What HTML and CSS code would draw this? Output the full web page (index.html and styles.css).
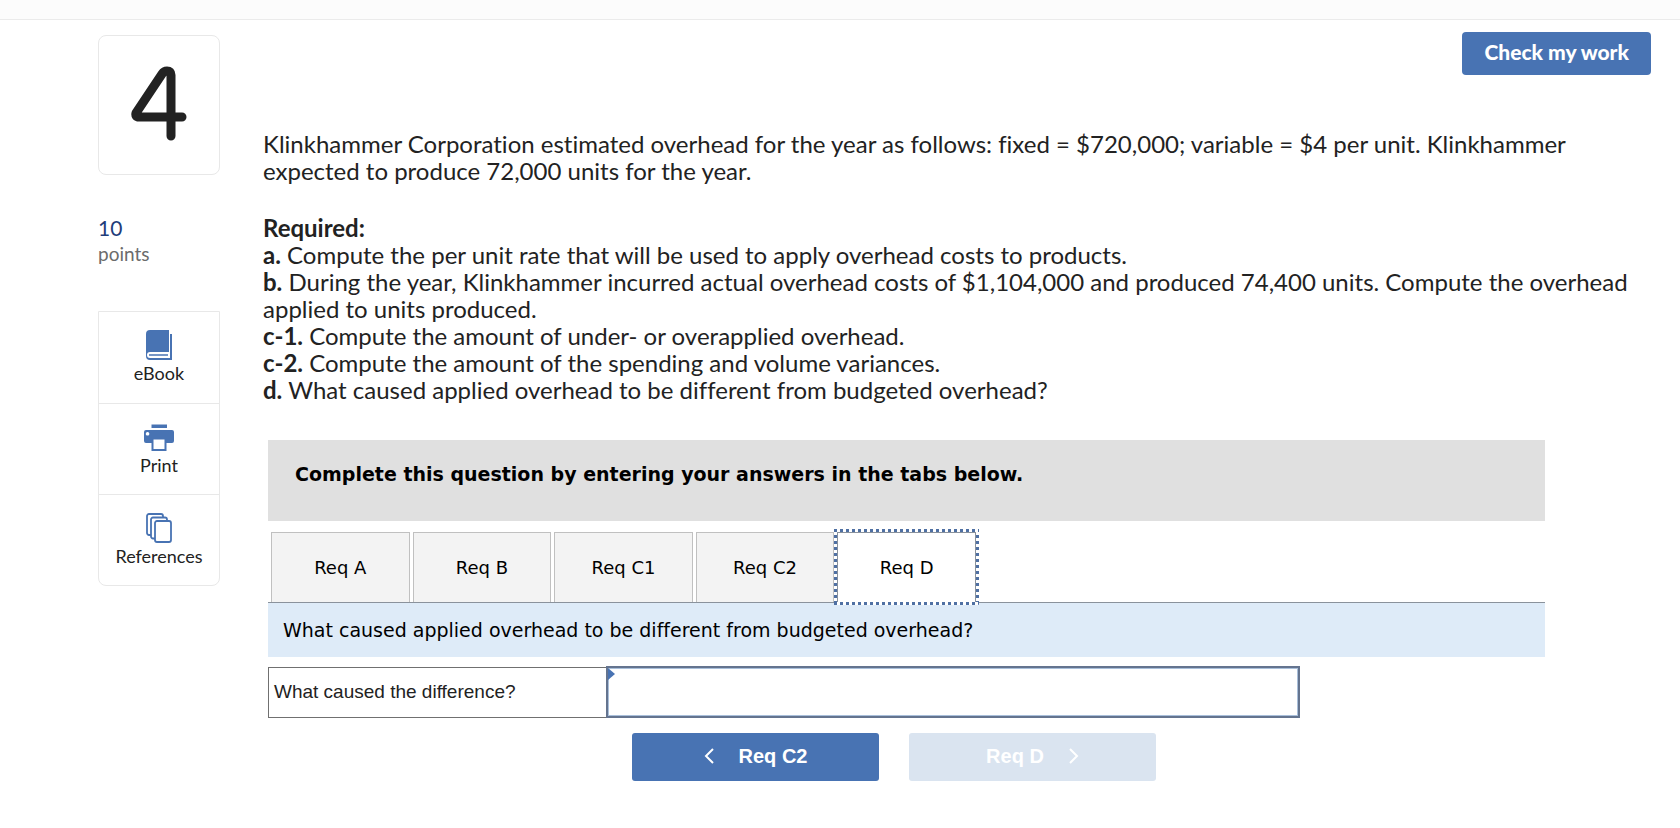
FILE: index.html
```
<!DOCTYPE html>
<html lang="en">
<head>
	<meta charset="utf-8">
	<meta name="viewport" content="width=device-width, initial-scale=1">
	<title>Question 4</title>
	<link rel="stylesheet" href="styles.css">
</head>
<body>
	<header class="topbar"></header>
	<div class="page">
		<aside class="sidebar">
			<div class="number">
				<svg width="56" height="76" viewBox="0 0 56 76" role="img" aria-label="4">
					<path d="M40 70V9Q40 5 36 5Q33 5 31 8L5 47Q4 51 8 51H51" fill="none" stroke="#222" stroke-width="9" stroke-linecap="round" stroke-linejoin="round"/>
				</svg>
			</div>
			<div class="points">
				<p class="points_num">10</p>
				<p class="points_text">points</p>
			</div>
			<nav class="tools">
				<a class="tool" href="#">
					<svg width="30" height="30" viewBox="0 0 30 30">
						<path fill-rule="evenodd" d="M6 0H25V22H6Q3 22 3 25Q3 28 6 28H26V4H28V30H6Q2 30 2 26V4Q2 0 6 0Z" fill="#4873b3"/>
						<path d="M5 25H24" stroke="#4873b3" stroke-width="1.5"/>
					</svg>
					<span>eBook</span>
				</a>
				<a class="tool" href="#">
					<svg width="30" height="30" viewBox="0 0 30 30">
						<path d="M7.500 2.500H23V6H7.500Z" fill="#4873b3"/>
						<path fill-rule="evenodd" d="M2 8H28Q30 8 30 10V19Q30 21 28 21H22.500V29H7.500V21H2Q0 21 0 19V10Q0 8 2 8ZM9.500 17.500V27H20.500V17.500ZM3.500 10A1.800 1.800 0 1 0 3.600 10Z" fill="#4873b3"/>
					</svg>
					<span>Print</span>
				</a>
				<a class="tool" href="#">
					<svg width="30" height="30" viewBox="0 0 30 30" fill="#fff" stroke="#4873b3" stroke-width="1.800">
						<rect x="3" y="1" width="16" height="21" rx="2"/>
						<rect x="7" y="4.500" width="16" height="21" rx="2"/>
						<rect x="11" y="8" width="16" height="21" rx="2"/>
					</svg>
					<span>References</span>
				</a>
			</nav>
		</aside>

		<main class="main">
			<div class="actions">
				<button class="check" type="button">Check my work</button>
			</div>
			<div class="question">
				<p class="intro">Klinkhammer Corporation estimated overhead for the year as follows: fixed = $720,000; variable = $4 per unit. Klinkhammer expected to produce 72,000 units for the year.</p>
				<p><b>Required:</b></p>
				<p><b>a.</b> Compute the per unit rate that will be used to apply overhead costs to products.</p>
				<p><b>b.</b> During the year, Klinkhammer incurred actual overhead costs of $1,104,000 and produced 74,400 units. Compute the overhead applied to units produced.</p>
				<p><b>c-1.</b> Compute the amount of under- or overapplied overhead.</p>
				<p><b>c-2.</b> Compute the amount of the spending and volume variances.</p>
				<p><b>d.</b> What caused applied overhead to be different from budgeted overhead?</p>
			</div>

			<section class="answer">
				<h2 class="notice">Complete this question by entering your answers in the tabs below.</h2>
				<div class="tabs_row">
					<div class="tabs" role="tablist">
						<button class="tab" type="button" role="tab">Req A</button>
						<button class="tab" type="button" role="tab">Req B</button>
						<button class="tab" type="button" role="tab">Req C1</button>
						<button class="tab" type="button" role="tab">Req C2</button>
						<button class="tab active" type="button" role="tab" aria-selected="true">Req D</button>
					</div>
				</div>
				<p class="prompt">What caused applied overhead to be different from budgeted overhead?</p>
				<table class="sheet">
					<tr>
						<th scope="row"><label for="difference">What caused the difference?</label></th>
						<td><input id="difference" type="text"></td>
					</tr>
				</table>
				<div class="pager">
					<button class="page_btn" type="button">
						<svg width="10" height="16" viewBox="0 0 10 16"><path d="M9 1L2 8L9 15"/></svg>
						<span>Req C2</span>
					</button>
					<button class="page_btn" type="button" disabled>
						<span>Req D</span>
						<svg width="10" height="16" viewBox="0 0 10 16"><path d="M1 1L8 8L1 15"/></svg>
					</button>
				</div>
			</section>
		</main>
	</div>
</body>
</html>
```
FILE: styles.css
```
* {
	box-sizing: border-box;
}

body,h2,p {
	margin: 0;
}

body {
	background: #fff;
	color: #222;
	font-family: Lato, sans-serif;
	font-variant-ligatures: none;
}

button {
	border: none;
	cursor: pointer;
}

.topbar {
	height: 20px;
	background: #fcfcfc;
	border-bottom: 1px solid #ebebeb;
}

.page {
	display: flex;
	gap: 43px;
	padding: 12px 29px 40px 98px;
}

/* left column */
.sidebar {
	flex: 0 0 122px;
	padding-top: 3px;
}

.number {
	display: flex;
	justify-content: center;
	height: 140px;
	padding-top: 30px;
	border: 1px solid #e8e8e8;
	border-radius: 8px;
}

.points {
	padding: 39px 0 45px;
}

.points_num {
	color: #1f3d7a;
	font-size: 21px;
	line-height: 28px;
}

.points_text {
	color: #6b6b6b;
	font-size: 19px;
	line-height: 24px;
}

.tools {
	border: 1px solid #e8e8e8;
	border-radius: 0 0 8px 8px;
}

.tool {
	display: flex;
	flex-direction: column;
	align-items: center;
	gap: 2px;
	height: 91px;
	padding-top: 18px;
	color: #222;
	font-size: 18px;
	line-height: 22px;
	text-decoration: none;
}

.tool + .tool {
	border-top: 1px solid #e8e8e8;
}

/* question */
.main {
	flex: 1;
	min-width: 0;
}

.actions {
	display: flex;
	justify-content: flex-end;
}

.check {
	height: 43px;
	padding: 0 22px 4px;
	border-radius: 4px;
	background: #4873b3;
	color: #fff;
	font: 900 21px Lato, sans-serif;
}

.question {
	padding: 55px 10px 0 0;
	font-size: 24px;
	line-height: 27px;
}

.intro {
	margin-bottom: 30px;
}

/* answer area */
.answer {
	margin: 37px 106px 0 5px;
	color: #000;
	font-family: "DejaVu Sans", sans-serif;
}

.notice {
	height: 81px;
	padding: 20px 27px;
	background: #e0e0e0;
	font-size: 19px;
	line-height: 28px;
}

.tabs_row {
	padding: 11px 3px 0;
	border-bottom: 1px solid #8a929c;
}

.tabs {
	display: flex;
	gap: 3px;
	max-width: 705px;
}

.tab {
	position: relative;
	flex: 1;
	height: 70px;
	border: 1px solid #c0c0c0;
	border-bottom: none;
	background: #f3f3f3;
	color: #000;
	font: 18px "DejaVu Sans", sans-serif;
}

.tab.active {
	background: #fff;
	border-color: #8a929c;
}

/* square-dotted focus ring */
.tab.active:after {
	content: "";
	position: absolute;
	top: -4px;
	right: -4px;
	bottom: -3px;
	left: -4px;
	background:
		repeating-linear-gradient(90deg, #4f70a3 0 3px, #fff 3px 6px) top / 100% 3px no-repeat,
		repeating-linear-gradient(90deg, #4f70a3 0 3px, #fff 3px 6px) bottom / 100% 3px no-repeat,
		repeating-linear-gradient(#4f70a3 0 3px, #fff 3px 6px) left / 3px 100% no-repeat,
		repeating-linear-gradient(#4f70a3 0 3px, #fff 3px 6px) right / 3px 100% no-repeat;
}

.prompt {
	padding: 14px 15px;
	background: #deebf8;
	font-size: 19px;
	line-height: 26px;
}

.sheet {
	width: 100%;
	max-width: 1032px;
	margin-top: 9px;
	border-collapse: collapse;
	table-layout: fixed;
	color: #222;
	font-family: "Liberation Sans", Arial, sans-serif;
}

.sheet th {
	width: 338px;
	padding: 0 5px;
	border: 1px solid #707070;
	font-size: 19px;
	font-weight: normal;
	text-align: left;
}

.sheet td {
	position: relative;
	padding: 0;
	border: 2px solid #64748f;
}

/* cell marker */
.sheet td:before {
	content: "";
	position: absolute;
	top: 0;
	left: 0;
	border: 6px solid transparent;
	border-left: 7px solid #4873b3;
	border-right: none;
}

.sheet input {
	display: block;
	width: 100%;
	height: 48px;
	padding: 0 12px;
	border: none;
	border-radius: 0;
	box-shadow: inset 0 0 0 1px #a9bfda;
	background: #fff;
	font: 19px "Liberation Sans", Arial, sans-serif;
}

.pager {
	display: flex;
	justify-content: center;
	gap: 30px;
	margin: 15px 25px 0 0;
}

.page_btn {
	display: flex;
	align-items: center;
	justify-content: center;
	gap: 25px;
	width: 247px;
	height: 48px;
	padding-bottom: 3px;
	border-radius: 3px;
	background: #4873b3;
	color: #fff;
	font: bold 20px "Liberation Sans", Arial, sans-serif;
}

.page_btn:disabled {
	background: #dae4f0;
	cursor: default;
}

.page_btn path {
	fill: none;
	stroke: #fff;
	stroke-width: 2;
}
```
